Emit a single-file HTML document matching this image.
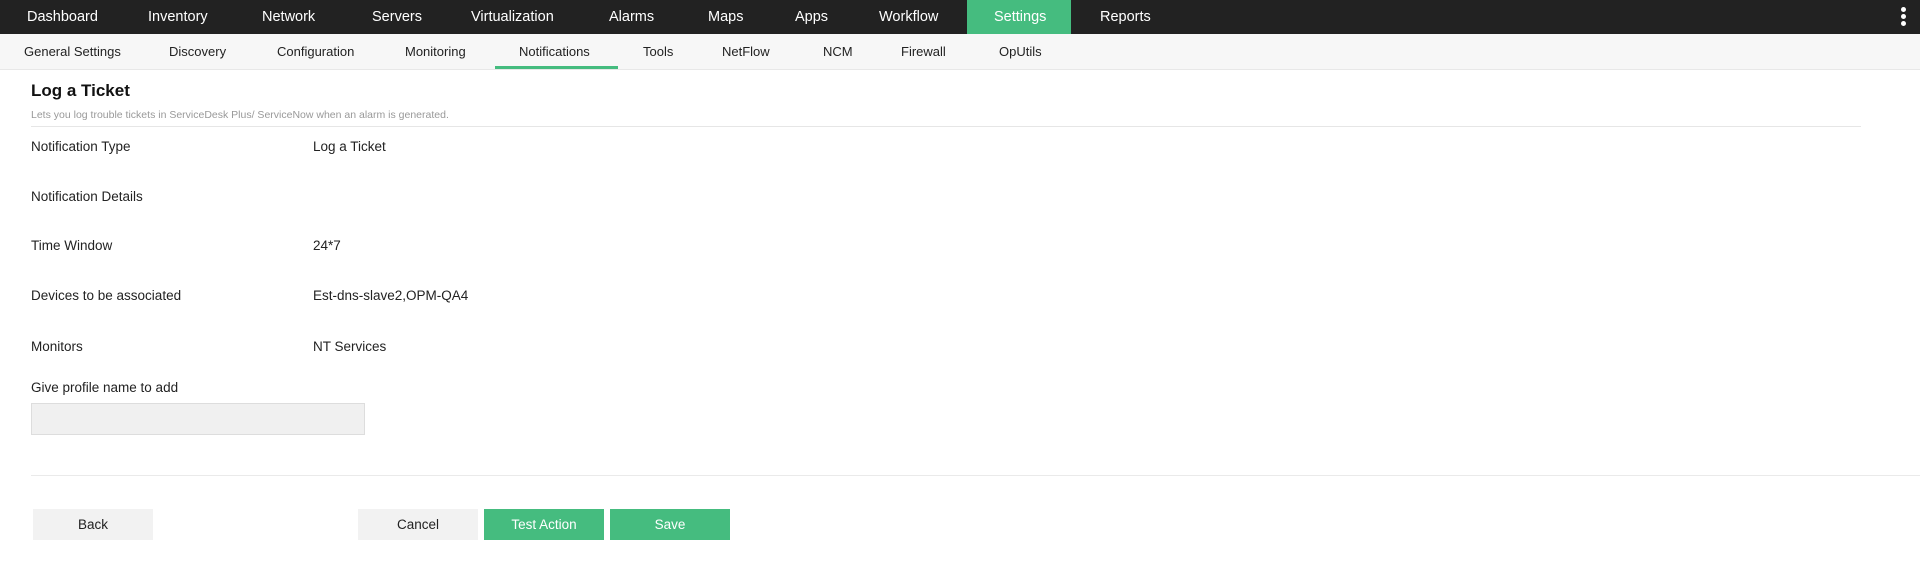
<!DOCTYPE html>
<html><head><style>
*{margin:0;padding:0;box-sizing:border-box}
body{width:1920px;height:563px;background:#fff;font-family:"Liberation Sans",sans-serif;position:relative;overflow:hidden;color:#222}
.a{position:absolute;white-space:nowrap}
.top{position:absolute;left:0;top:0;width:1920px;height:34px;background:#222}
.top .a{color:#fff;font-size:14.5px;top:9px}
.sub{position:absolute;left:0;top:34px;width:1920px;height:36px;background:#f7f7f7;border-bottom:1px solid #e8e8e8}
.sub .a{font-size:13px;top:10px;color:#222}
.lbl{font-size:13.5px;color:#222}
.btn{position:absolute;top:509px;height:31px;width:120px;font-size:13.5px;text-align:center;line-height:31px}
</style></head><body>
<div class="top">
<div class="a" style="left:967px;top:0;width:104px;height:34px;background:#45bc7f"></div>
<span class="a" style="left:27px">Dashboard</span>
<span class="a" style="left:148px">Inventory</span>
<span class="a" style="left:262px">Network</span>
<span class="a" style="left:372px">Servers</span>
<span class="a" style="left:471px">Virtualization</span>
<span class="a" style="left:609px">Alarms</span>
<span class="a" style="left:708px">Maps</span>
<span class="a" style="left:795px">Apps</span>
<span class="a" style="left:879px">Workflow</span>
<span class="a" style="left:994px">Settings</span>
<span class="a" style="left:1100px">Reports</span>
<div class="a" style="left:1901px;top:7px;width:5px;height:5px;border-radius:50%;background:#fff"></div>
<div class="a" style="left:1901px;top:14px;width:5px;height:5px;border-radius:50%;background:#fff"></div>
<div class="a" style="left:1901px;top:21px;width:5px;height:5px;border-radius:50%;background:#fff"></div>
</div>
<div class="sub">
<span class="a" style="left:24px">General Settings</span>
<span class="a" style="left:169px">Discovery</span>
<span class="a" style="left:277px">Configuration</span>
<span class="a" style="left:405px">Monitoring</span>
<span class="a" style="left:519px">Notifications</span>
<span class="a" style="left:643px">Tools</span>
<span class="a" style="left:722px">NetFlow</span>
<span class="a" style="left:823px">NCM</span>
<span class="a" style="left:901px">Firewall</span>
<span class="a" style="left:999px">OpUtils</span>
<div class="a" style="left:495px;top:32px;width:123px;height:3px;background:#45bc7f"></div>
</div>
<div class="a" style="left:31px;top:81px;font-size:17px;font-weight:bold;color:#111">Log a Ticket</div>
<div class="a" style="left:31px;top:109px;font-size:10.5px;color:#999">Lets you log trouble tickets in ServiceDesk Plus/ ServiceNow when an alarm is generated.</div>
<div class="a" style="left:31px;top:126px;width:1830px;height:1px;background:#e6e6e6"></div>
<div class="a lbl" style="left:31px;top:139px">Notification Type</div><div class="a lbl" style="left:313px;top:139px">Log a Ticket</div>
<div class="a lbl" style="left:31px;top:189px">Notification Details</div>
<div class="a lbl" style="left:31px;top:238px">Time Window</div><div class="a lbl" style="left:313px;top:238px">24*7</div>
<div class="a lbl" style="left:31px;top:288px">Devices to be associated</div><div class="a lbl" style="left:313px;top:288px">Est-dns-slave2,OPM-QA4</div>
<div class="a lbl" style="left:31px;top:339px">Monitors</div><div class="a lbl" style="left:313px;top:339px">NT Services</div>
<div class="a lbl" style="left:31px;top:380px">Give profile name to add</div>
<div class="a" style="left:31px;top:403px;width:334px;height:32px;background:#f0f0f0;border:1px solid #ddd"></div>
<div class="a" style="left:31px;top:475px;width:1889px;height:1px;background:#eaeaea"></div>
<div class="btn" style="left:33px;background:#f2f2f2">Back</div>
<div class="btn" style="left:358px;background:#f2f2f2">Cancel</div>
<div class="btn" style="left:484px;background:#45bc7f;color:#fff">Test Action</div>
<div class="btn" style="left:610px;background:#45bc7f;color:#fff">Save</div>
</body></html>
